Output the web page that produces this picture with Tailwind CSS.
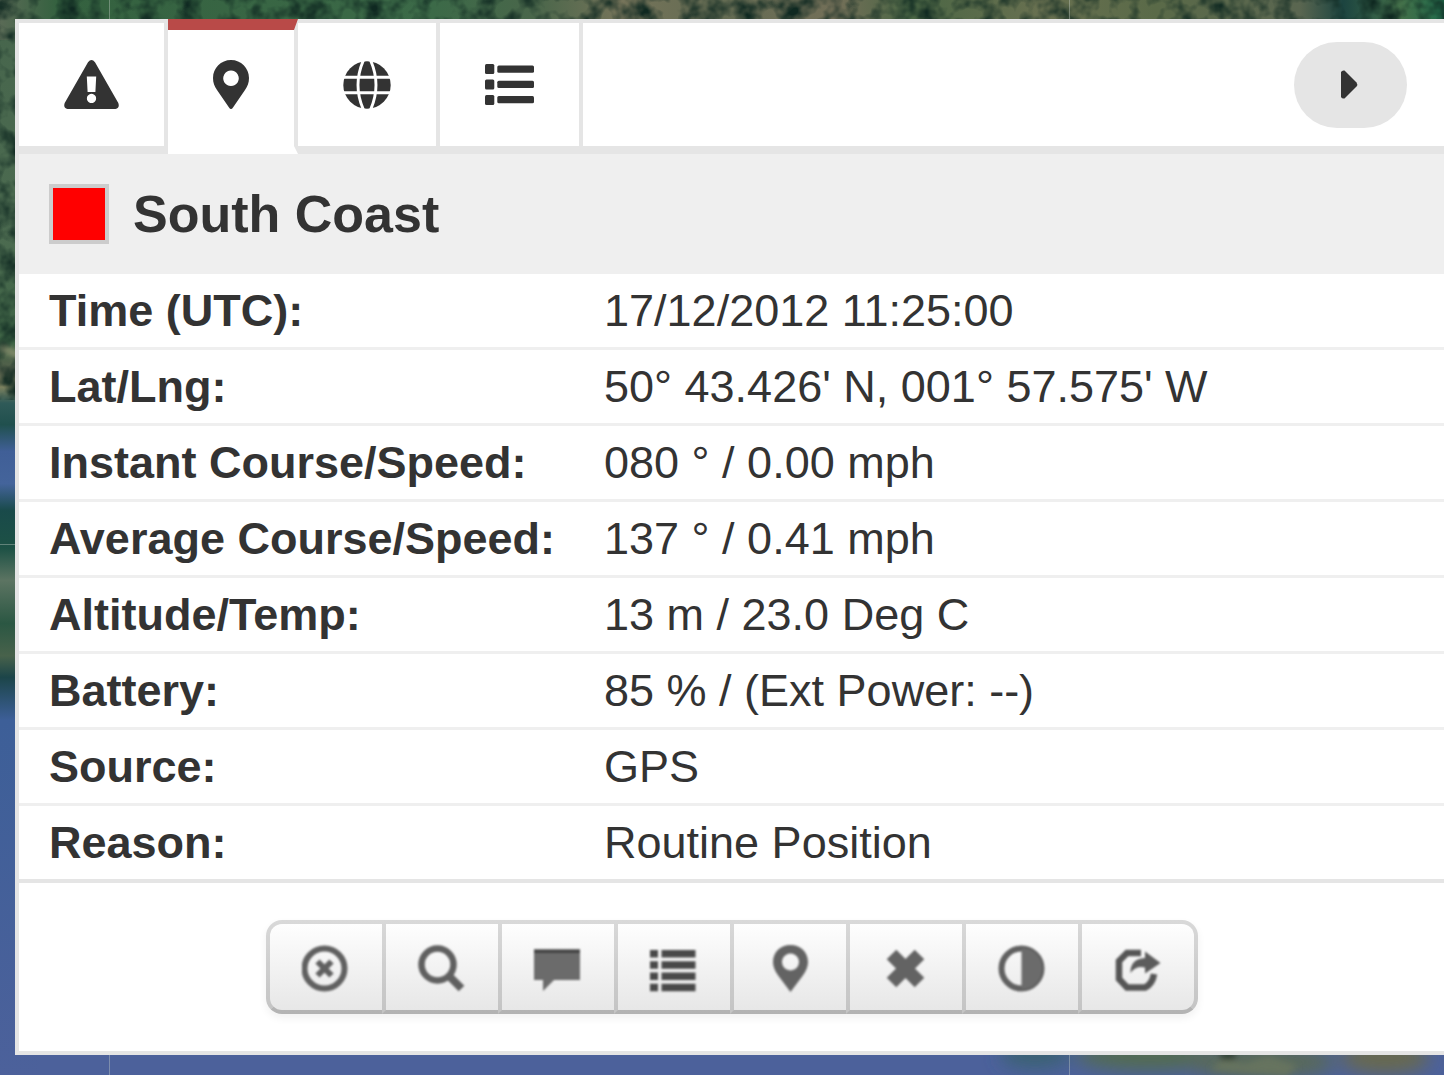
<!DOCTYPE html>
<html lang="en">
<head>
<meta charset="utf-8">
<meta name="viewport" content="width=device-width, initial-scale=1">
<title>South Coast</title>
<script src="https://cdn.jsdelivr.net/npm/@tailwindcss/browser@4"></script>
</head>
<body class="relative min-h-screen overflow-x-hidden bg-[#4c619b] pt-[19px] pb-5 pl-[15px] font-['Liberation_Sans',Arial,sans-serif] text-[#333]">

<!-- Satellite map behind the panel -->
<svg class="absolute inset-0 h-full w-full" viewBox="0 0 1444 1075" preserveAspectRatio="none" aria-hidden="true">
  <defs>
    <filter id="soft" x="-20%" y="-60%" width="140%" height="220%"><feGaussianBlur stdDeviation="9"/></filter>
    <filter id="fine" x="-20%" y="-20%" width="140%" height="140%"><feGaussianBlur stdDeviation="3"/></filter>
    <filter id="grain" x="0" y="0" width="100%" height="100%" color-interpolation-filters="sRGB">
      <feTurbulence type="fractalNoise" baseFrequency="0.05" numOctaves="3" seed="4"/>
      <feColorMatrix values="0 0 0 0 0.06  0 0 0 0 0.16  0 0 0 0 0.13  2.4 0 0 0 -0.95"/>
    </filter>
    <linearGradient id="top" x1="0" x2="1">
      <stop offset="0" stop-color="#5a6b56"/><stop offset=".04" stop-color="#34613f"/>
      <stop offset=".3" stop-color="#3c6a48"/><stop offset=".37" stop-color="#49664a"/>
      <stop offset=".43" stop-color="#76745a"/><stop offset=".5" stop-color="#636b52"/>
      <stop offset=".58" stop-color="#736f58"/><stop offset=".63" stop-color="#4a6644"/>
      <stop offset=".72" stop-color="#687050"/><stop offset=".8" stop-color="#5a6a48"/>
      <stop offset=".9" stop-color="#5a6650"/><stop offset=".93" stop-color="#1c4440"/>
      <stop offset=".97" stop-color="#447049"/><stop offset="1" stop-color="#1f6a4a"/>
    </linearGradient>
    <linearGradient id="side" x1="0" x2="0" y1="0" y2="1">
      <stop offset="0" stop-color="#46654c"/><stop offset=".22" stop-color="#4c6b50"/>
      <stop offset=".32" stop-color="#3d6344"/><stop offset=".345" stop-color="#57604c"/>
      <stop offset=".36" stop-color="#7c815e"/><stop offset=".375" stop-color="#2f5a58"/>
      <stop offset=".395" stop-color="#20504e"/><stop offset=".42" stop-color="#405f97"/>
      <stop offset=".45" stop-color="#44649b"/><stop offset=".475" stop-color="#194a4a"/>
      <stop offset=".51" stop-color="#1d5145"/><stop offset=".54" stop-color="#5c7462"/>
      <stop offset=".58" stop-color="#2b5743"/><stop offset=".61" stop-color="#48624b"/>
      <stop offset=".63" stop-color="#1c4549"/><stop offset=".67" stop-color="#3d5f98"/>
      <stop offset="1" stop-color="#4c619b"/>
    </linearGradient>
  </defs>
  <rect width="1444" height="1075" fill="#4c619b"/>
  <rect width="40" height="1075" fill="url(#side)"/>
  <rect width="1444" height="40" fill="url(#top)"/>
  <rect width="1444" height="30" filter="url(#grain)"/>
  <rect y="30" width="24" height="370" filter="url(#grain)"/>
  <g filter="url(#soft)">
    <ellipse cx="1035" cy="1054" rx="35" ry="14" fill="#3b6272"/>
    <ellipse cx="1150" cy="1056" rx="75" ry="14" fill="#526c50"/>
    <ellipse cx="1260" cy="1062" rx="75" ry="18" fill="#59695a"/>
    <ellipse cx="1385" cy="1058" rx="45" ry="16" fill="#67694f"/>
  </g>
  <g filter="url(#fine)">
    <path d="M1210 1070l14-12 20 6 24-8 30 10-12 10z" fill="#66735f"/>
    <ellipse cx="1228" cy="1056" rx="9" ry="4" fill="#26372d"/>
    <path d="M0 345l20 8v5L0 350z" fill="#a5a37e"/>
  </g>
  <path d="M109.500 0V1075M1069.500 0V1075M0 544.500H30" stroke="#c8d0c8" stroke-opacity=".4" fill="none"/>
</svg>

<main class="relative border-b-4 border-l-4 border-[#e5e5e5] bg-white">

  <nav class="flex h-[135px]" aria-label="Panel views">
    <button type="button" aria-label="Alerts" class="flex items-center border-t-4 border-r-4 border-b-8 border-[#e5e5e5] px-[45px]">
      <svg class="h-[49px] w-[55px]" viewBox="0 0 55 49" fill="#333"><path fill-rule="evenodd" d="M24 2.200Q27.500-2.200 31 2.200L54.300 43Q56 48 51.500 49H3.500Q-1 48 .7 43ZM22.800 16.500L23.600 32H31.400L32.200 16.500ZM27.500 33.800a4.600 4.600 0 1 0 .01 0Z"/></svg>
    </button>
    <button type="button" aria-label="Position" aria-current="page" class="flex items-center border-t-[11px] border-r-4 border-b-8 border-t-[#b94a48] border-r-[#e5e5e5] border-b-white bg-white px-[45px] pb-[7px]">
      <svg class="h-[49px] w-[36px]" viewBox="0 0 36 49" fill="#333"><path fill-rule="evenodd" d="M18 0C8 0 0 8 0 18c0 5 1.500 8 4 12l12 17.500q2 3 4 0L32 30c2.500-4 4-7 4-12C36 8 28 0 18 0Zm0 10.500a7.800 7.800 0 1 1-.01 0Z"/></svg>
    </button>
    <button type="button" aria-label="Map" class="flex items-center border-t-4 border-r-4 border-b-8 border-[#e5e5e5] px-[45px]">
      <svg class="size-12" viewBox="0 0 48 48"><circle cx="24" cy="24" r="23.700" fill="#333"/><path d="M0 16.300H48M0 31.700H48M21 -2Q9 24 21 50M27 -2Q39 24 27 50" fill="none" stroke="#fff" stroke-width="2.900"/></svg>
    </button>
    <button type="button" aria-label="List" class="flex items-center border-t-4 border-r-4 border-b-8 border-[#e5e5e5] px-[45px]">
      <svg class="h-[41px] w-[49px]" viewBox="0 0 49 41" fill="#333"><rect width="9.300" height="10" rx="1.500"/><rect y="15.500" width="9.300" height="10" rx="1.500"/><rect y="31" width="9.300" height="10" rx="1.500"/><rect x="12.300" y="1.500" width="36.700" height="7.300" rx="1.500"/><rect x="12.300" y="16.800" width="36.700" height="7.300" rx="1.500"/><rect x="12.300" y="32" width="36.700" height="7.300" rx="1.500"/></svg>
    </button>
    <div class="flex flex-1 items-center justify-end border-t-4 border-b-8 border-[#e5e5e5] pr-[37px]">
      <button type="button" aria-label="Collapse panel" class="flex h-[86px] w-[113px] items-center justify-center rounded-full bg-[#e5e5e5]">
        <svg class="h-[29px] w-5" viewBox="0 0 20 29" fill="#333"><path d="M0 2Q1 0 3.500 .5L15.500 12.500Q17 14.500 15.500 16.500L3.500 28.500Q1 29 0 27Z"/></svg>
      </button>
    </div>
  </nav>

  <header class="flex h-[120px] items-center gap-6 bg-[#efefef] pl-[30px]">
    <span class="size-[60px] border-4 border-[#ccc] bg-[red]"></span>
    <h1 class="text-[52px] leading-[60px] font-bold">South Coast</h1>
  </header>

  <table class="w-full text-left text-[45px] leading-[73px] whitespace-nowrap">
    <tbody>
      <tr class="border-b-3 border-[#efefef]"><th scope="row" class="w-px pr-[49px] pl-[30px] font-bold">Time (UTC):</th><td>17/12/2012 11:25:00</td></tr>
      <tr class="border-b-3 border-[#efefef]"><th scope="row" class="pr-[49px] pl-[30px] font-bold">Lat/Lng:</th><td>50° 43.426' N, 001° 57.575' W</td></tr>
      <tr class="border-b-3 border-[#efefef]"><th scope="row" class="pr-[49px] pl-[30px] font-bold">Instant Course/Speed:</th><td>080 ° / 0.00 mph</td></tr>
      <tr class="border-b-3 border-[#efefef]"><th scope="row" class="pr-[49px] pl-[30px] font-bold">Average Course/Speed:</th><td>137 ° / 0.41 mph</td></tr>
      <tr class="border-b-3 border-[#efefef]"><th scope="row" class="pr-[49px] pl-[30px] font-bold">Altitude/Temp:</th><td>13 m / 23.0 Deg C</td></tr>
      <tr class="border-b-3 border-[#efefef]"><th scope="row" class="pr-[49px] pl-[30px] font-bold">Battery:</th><td>85 % / (Ext Power: --)</td></tr>
      <tr class="border-b-3 border-[#efefef]"><th scope="row" class="pr-[49px] pl-[30px] font-bold">Source:</th><td>GPS</td></tr>
      <tr class="border-b-4 border-[#e5e5e5]"><th scope="row" class="pr-[49px] pl-[30px] font-bold">Reason:</th><td>Routine Position</td></tr>
    </tbody>
  </table>

  <footer class="flex justify-center py-[37px]">
    <div role="group" aria-label="Position actions" class="flex h-[94px] rounded-[16px] shadow-[0_4px_8px_rgba(0,0,0,0.06)]">
      <button type="button" aria-label="Close" class="flex w-[116px] items-center justify-center rounded-l-[16px] border-y-4 border-l-4 border-black/15 border-b-black/22 bg-linear-to-b from-white to-[#e6e6e6] bg-origin-border pt-0.5">
        <svg class="size-[47px] blur-[1px]" viewBox="0 0 47 47" fill="none" stroke="#606060"><circle cx="22.500" cy="23.500" r="20" stroke-width="6"/><path d="M15.500 16.500l14 14M29.500 16.500l-14 14" stroke-width="6"/></svg>
      </button>
      <button type="button" aria-label="Zoom in" class="flex w-[116px] items-center justify-center border-y-4 border-l-4 border-black/15 border-b-black/22 bg-linear-to-b from-white to-[#e6e6e6] bg-origin-border pt-0.5">
        <svg class="size-[47px] blur-[1px]" viewBox="0 0 47 47" fill="none" stroke="#606060"><circle cx="19.500" cy="19.500" r="16" stroke-width="6.500"/><path d="M30.500 30.500L43.500 43.500" stroke-width="8"/></svg>
      </button>
      <button type="button" aria-label="Message" class="flex w-[116px] items-center justify-center border-y-4 border-l-4 border-black/15 border-b-black/22 bg-linear-to-b from-white to-[#e6e6e6] bg-origin-border pt-0.5">
        <svg class="size-[47px] blur-[1px]" viewBox="0 0 47 47"><path d="M0 4.500H46V35H20L9 46V35H0Z" fill="#6b6b6b"/><path d="M0 4.500H46V8H0Z" fill="#444"/></svg>
      </button>
      <button type="button" aria-label="Show list" class="flex w-[116px] items-center justify-center border-y-4 border-l-4 border-black/15 border-b-black/22 bg-linear-to-b from-white to-[#e6e6e6] bg-origin-border pt-0.5">
        <svg class="size-[47px] blur-[1px]" viewBox="0 0 47 47" fill="#494949"><path d="M0 5h8v7.500H0zM11.500 5h34v7.500h-34zM0 16.200h8v7.500H0zM11.500 16.200h34v7.500h-34zM0 27.500h8V35H0zM11.500 27.500h34V35h-34zM0 38.700h8v7.500H0zM11.500 38.700h34v7.500h-34z"/></svg>
      </button>
      <button type="button" aria-label="Centre on marker" class="flex w-[116px] items-center justify-center border-y-4 border-l-4 border-black/15 border-b-black/22 bg-linear-to-b from-white to-[#e6e6e6] bg-origin-border pt-0.5">
        <svg class="size-[47px] blur-[1px]" viewBox="0 0 47 47" fill="#636363"><path fill-rule="evenodd" d="M24.500 0C14.500 0 7 7 7 17c0 5 2 9 5.500 14L24.500 47 36.500 31c3.500-5 5.500-9 5.500-14C42 7 34.500 0 24.500 0Zm0 8.500a8.500 8.500 0 1 1-.01 0Z"/></svg>
      </button>
      <button type="button" aria-label="Remove" class="flex w-[116px] items-center justify-center border-y-4 border-l-4 border-black/15 border-b-black/22 bg-linear-to-b from-white to-[#e6e6e6] bg-origin-border pt-0.5">
        <svg class="size-[47px] blur-[1px]" viewBox="0 0 47 47" fill="none" stroke="#636363" stroke-width="13.500"><path d="M9.500 9.500l28 28M37.500 9.500l-28 28"/></svg>
      </button>
      <button type="button" aria-label="Contrast" class="flex w-[116px] items-center justify-center border-y-4 border-l-4 border-black/15 border-b-black/22 bg-linear-to-b from-white to-[#e6e6e6] bg-origin-border pt-0.5">
        <svg class="size-[47px] blur-[1px]" viewBox="0 0 47 47"><circle cx="23.500" cy="23.500" r="20" fill="none" stroke="#606060" stroke-width="6"/><path d="M23.500 3a20.500 20.500 0 0 1 0 41Z" fill="#6b6b6b"/></svg>
      </button>
      <button type="button" aria-label="Share" class="flex w-[120px] items-center justify-center rounded-r-[16px] border-4 border-black/15 border-b-black/22 bg-linear-to-b from-white to-[#e6e6e6] bg-origin-border pt-0.5">
        <svg class="size-[47px] blur-[1px]" viewBox="0 0 47 47"><path d="M27 8H13L5 16V34L13 42.500H31Q38.500 39 40 29" fill="none" stroke="#555" stroke-width="6.500"/><path d="M31 6.500L46.500 18 31 28.500V22.500Q22 20.500 16.500 28Q16 14 31 13Z" fill="#5c5c5c"/></svg>
      </button>
    </div>
  </footer>
</main>
</body>
</html>
